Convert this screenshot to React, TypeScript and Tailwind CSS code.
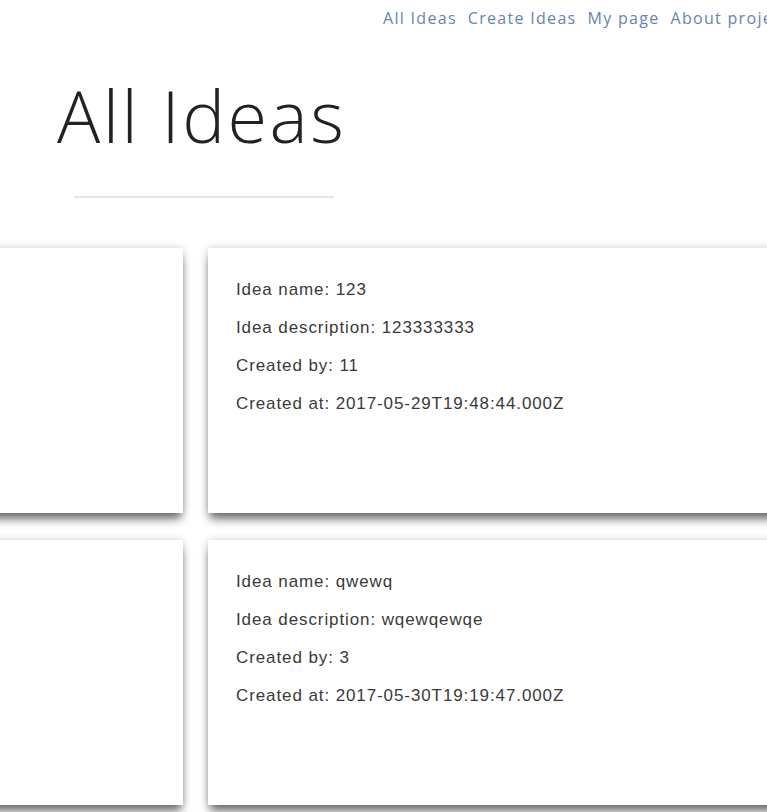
import React from "react";

const ideas = [
  { name: "123", desc: "123333333", by: "11", at: "2017-05-29T19:48:44.000Z" },
  { name: "qwewq", desc: "wqewqewqe", by: "3", at: "2017-05-30T19:19:47.000Z" },
];

function Card({ children, className }: { children?: React.ReactNode; className?: string }) {
  return (
    <div
      className={
        "bg-white h-[265px] shrink-0 shadow-[0_8px_9px_-2px_rgba(0,0,0,0.55),0_0_8px_rgba(0,0,0,0.18)] " +
        (className ?? "")
      }
    >
      {children}
    </div>
  );
}

export default function App() {
  return (
    <div className="w-[767px] h-[812px] overflow-hidden bg-white relative">
      <nav
        className="flex gap-[11px] pl-[383px] pt-[7px] whitespace-nowrap text-[16px] leading-[22px] tracking-[1.3px] text-[#6485ad]"
        style={{ fontFamily: '"Open Sans", "Noto Sans", sans-serif' }}
      >
        <a>All Ideas</a>
        <a>Create Ideas</a>
        <a>My page</a>
        <a>About project</a>
      </nav>
      <h1
        className="ml-[57px] mt-[46px] text-[72px] leading-[80px] font-light text-[#222] tracking-[2.5px]"
        style={{ fontFamily: '"Open Sans", "Noto Sans", sans-serif' }}
      >
        All Ideas
      </h1>
      <div className="ml-[74px] mt-[41px] w-[260px] h-[2px] bg-[#e6e6e6]" />
      <div className="mt-[50px] flex flex-col gap-[27px]">
        {ideas.map((it, i) => (
          <div key={i} className="flex gap-[25px] -ml-[20px]">
            <Card className="w-[203px]" />
            <Card className="w-[600px]">
              <div
                className="pl-[28px] pt-[23px] text-[17px] leading-[38px] tracking-[0.9px] text-[#3a3a3a]"
                style={{ fontFamily: '"Liberation Sans", Arial, sans-serif' }}
              >
                <div>Idea name: {it.name}</div>
                <div>Idea description: {it.desc}</div>
                <div>Created by: {it.by}</div>
                <div>Created at: {it.at}</div>
              </div>
            </Card>
          </div>
        ))}
      </div>
    </div>
  );
}
